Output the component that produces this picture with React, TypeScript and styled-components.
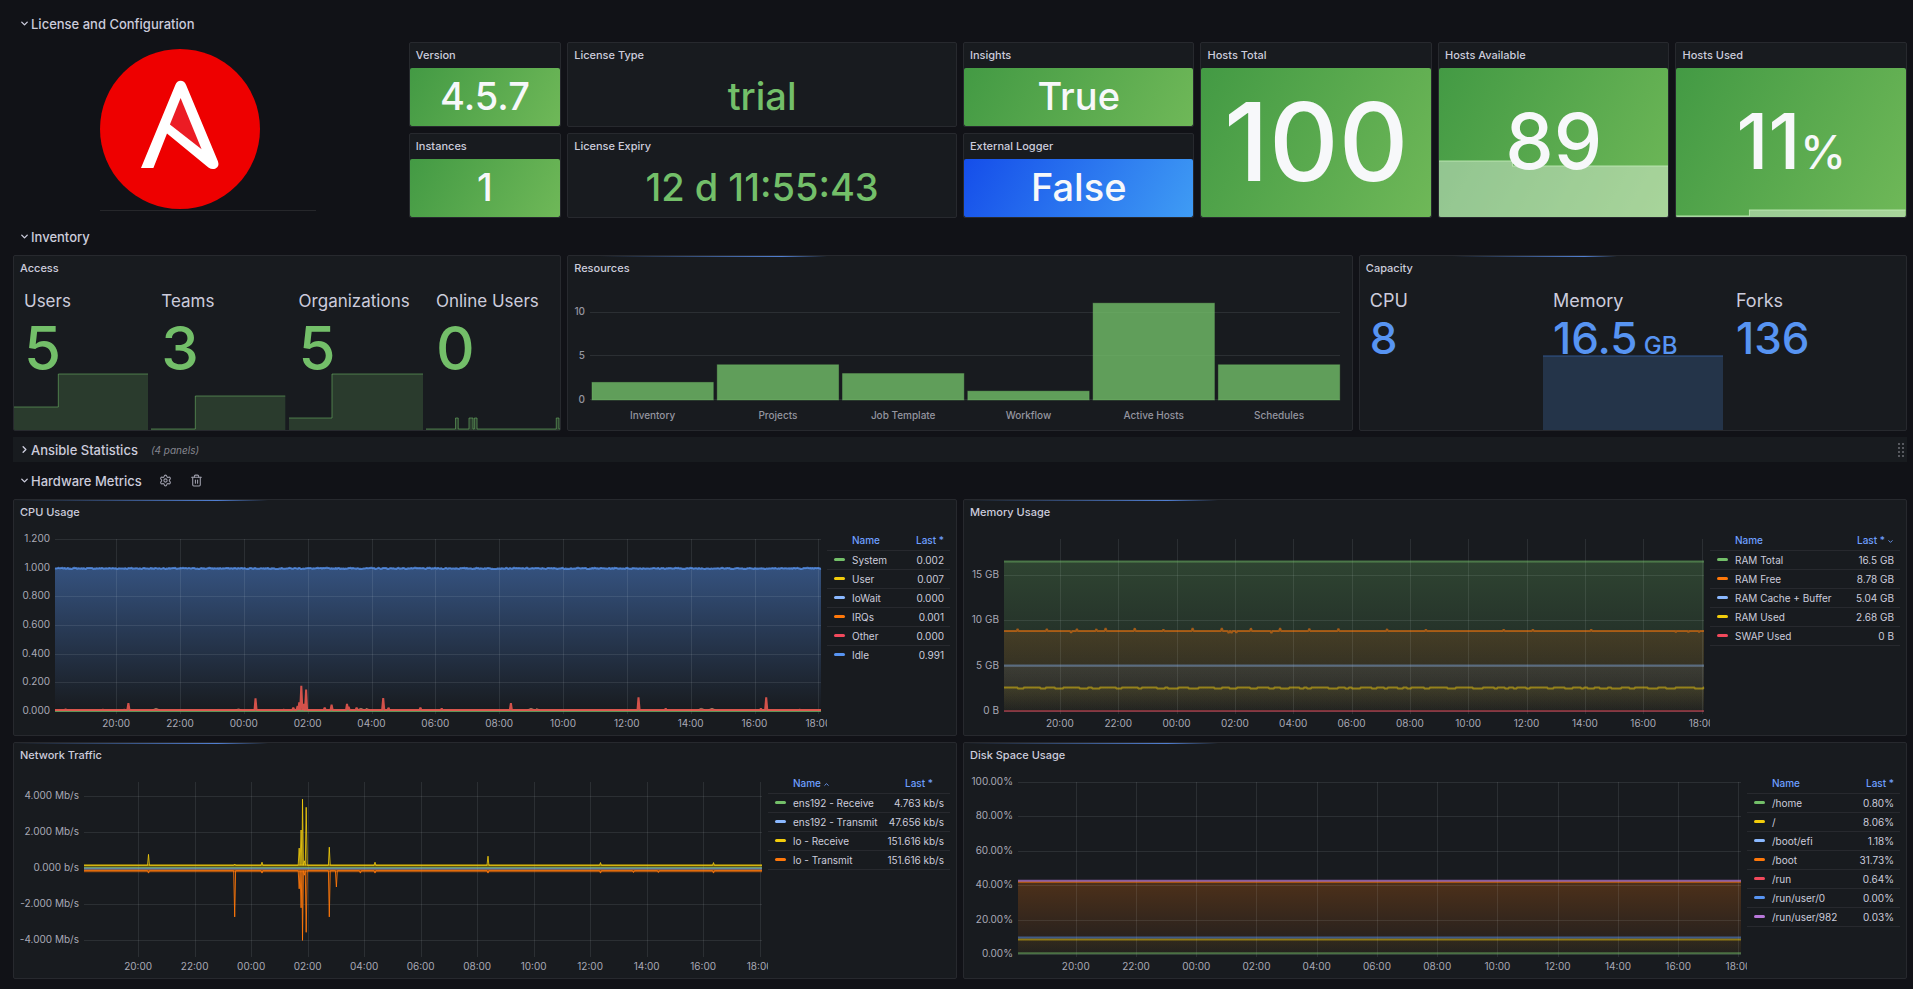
import React, { useId, useLayoutEffect, useRef, useState } from 'react';
import styled, { createGlobalStyle, css } from 'styled-components';
import { ChevronDown, ChevronRight, ChevronUp, Settings, Trash2 } from 'lucide-react';

const color = {
  page: '#111217',
  panel: '#181b1f',
  border: '#27292e',
  text: '#ccccdc',
  muted: '#9d9daa',
  link: '#6e9fff',
  green: '#73bf69',
  blue: '#5794f2',
  lightBlue: '#8ab8ff',
  yellow: '#f2cc0c',
  orange: '#ff780a',
  red: '#f2495c',
  purple: '#b877d9',
  grid: 'rgba(240, 250, 255, 0.09)',
};

const GlobalStyle = createGlobalStyle`
  * { box-sizing: border-box; }
  body {
    margin: 0;
    background: ${color.page};
    color: ${color.text};
    font-family: Inter, "Liberation Sans", sans-serif;
    font-size: 11px;
  }
`;

/* ---------- layout ---------- */

const Page = styled.main`
  display: flex;
  flex-direction: column;
  gap: 6px;
  min-height: 100vh;
  padding: 11px 6px 8px 13px;
`;

const PanelGrid = styled.section<{ $rowHeight: number }>`
  display: grid;
  grid-template-columns: repeat(24, minmax(0, 1fr));
  grid-auto-rows: minmax(${(p) => p.$rowHeight}px, auto);
  gap: 6px;
`;

const RowBar = styled.header<{ $filled?: boolean }>`
  display: flex;
  align-items: center;
  height: 25px;
  padding: 0 3px 0 6px;
  background: ${(p) => (p.$filled ? color.panel : 'transparent')};
`;

const RowHeading = styled.h2`
  margin: 0;
  font-size: 13px;
  line-height: 16px;
  font-weight: 500;
`;

const RowToggle = styled.button`
  display: flex;
  align-items: center;
  gap: 1px;
  padding: 0;
  border: 0;
  background: none;
  color: inherit;
  font: inherit;
  cursor: pointer;
`;

const RowCount = styled.span`
  margin-left: 13px;
  color: #85868f;
  font-size: 10px;
  font-style: italic;
`;

const RowActions = styled.div`
  display: flex;
  gap: 18px;
  margin-left: 17px;
`;

const IconButton = styled.button`
  display: flex;
  padding: 0;
  border: 0;
  background: none;
  color: ${color.muted};
  cursor: pointer;
`;

const DragHandle = styled.span`
  display: grid;
  grid-template-columns: 2px 2px;
  gap: 2px;
  margin-left: auto;
  cursor: move;
`;

const DragDot = styled.i`
  width: 2px;
  height: 2px;
  background: #57595f;
`;

/* ---------- panels ---------- */

const PanelBox = styled.article<{ $cols: number; $rows?: number }>`
  position: relative;
  grid-column: span ${(p) => p.$cols};
  grid-row: span ${(p) => p.$rows ?? 1};
  display: flex;
  flex-direction: column;
  border: 1px solid ${color.border};
  border-radius: 2px;
  background: ${color.panel};
  overflow: hidden;
`;

const PanelTitle = styled.h3`
  flex: none;
  height: 25px;
  margin: 0;
  padding: 0 6px;
  font-size: 11px;
  line-height: 24px;
  font-weight: 500;
`;

const Loader = styled.div<{ $from: number; $span: number }>`
  position: absolute;
  top: 0;
  left: ${(p) => p.$from}%;
  width: ${(p) => p.$span}%;
  height: 1px;
  background: linear-gradient(90deg, rgba(87, 138, 230, 0), rgba(87, 138, 230, 0.9) 80%, rgba(87, 138, 230, 0));
`;

type PanelProps = {
  title: string;
  cols: number;
  rows?: number;
  loader?: [number, number];
  children: React.ReactNode;
};

const Panel = ({ title, cols, rows, loader, children }: PanelProps) => (
  <PanelBox $cols={cols} $rows={rows}>
    {loader && <Loader $from={loader[0]} $span={loader[1]} />}
    <PanelTitle>{title}</PanelTitle>
    {children}
  </PanelBox>
);

/* ---------- stat panels ---------- */

type Tone = 'green' | 'blue' | 'plain';

const StatBody = styled.div<{ $tone: Tone }>`
  position: relative;
  flex: 1;
  display: flex;
  align-items: center;
  justify-content: center;
  padding-bottom: 2px;
  border-radius: 2px;
  color: #f7f8fa;
  ${(p) =>
    p.$tone === 'green' &&
    css`
      background: linear-gradient(120deg, #439a44, #6fb858);
    `}
  ${(p) =>
    p.$tone === 'blue' &&
    css`
      background: linear-gradient(120deg, #154eea, #3f9cf4);
    `}
  ${(p) =>
    p.$tone === 'plain' &&
    css`
      color: ${color.green};
    `}
`;

const StatValue = styled.span<{ $size: number }>`
  position: relative;
  font-size: ${(p) => p.$size}px;
  line-height: 1;
  font-weight: 500;
  white-space: pre;
`;

const Unit = styled.span<{ $size: number }>`
  font-size: ${(p) => p.$size}px;
`;

const SparkSvg = styled.svg<{ $height: number }>`
  position: absolute;
  left: 0;
  bottom: 0;
  display: block;
  width: 100%;
  height: ${(p) => p.$height}px;
`;

type SparkProps = { height: number; points: [number, number][]; stroke: string; fill: string };

/* Step-shaped history; x runs 0-100 over the width, y is pixels above the base line. */
const Spark = ({ height, points, stroke, fill }: SparkProps) => {
  let line = '';
  points.forEach(([x, v], i) => {
    const y = height - v;
    line += i === 0 ? `M${x} ${y}` : `H${x}V${y}`;
  });
  line += 'H100';
  return (
    <SparkSvg $height={height} viewBox={`0 0 100 ${height}`} preserveAspectRatio="none" aria-hidden="true">
      <path d={`${line}V${height}H0Z`} fill={fill} />
      <path d={line} fill="none" stroke={stroke} vectorEffect="non-scaling-stroke" />
    </SparkSvg>
  );
};

const MetricRow = styled.div`
  flex: 1;
  display: flex;
  gap: 3px;
`;

const Metric = styled.div<{ $tint: string }>`
  position: relative;
  flex: 1 1 0;
  min-width: 0;
  padding: 9px 0 0 10px;
  color: ${(p) => p.$tint};
  white-space: nowrap;
`;

const MetricLabel = styled.div<{ $size: number }>`
  color: ${color.text};
  font-size: ${(p) => p.$size}px;
  line-height: 22px;
`;

const MetricValue = styled.div<{ $size: number; $line: number }>`
  position: relative;
  font-size: ${(p) => p.$size}px;
  line-height: ${(p) => p.$line}px;
  font-weight: 500;
`;

/* ---------- legend ---------- */

const LegendTable = styled.table<{ $width: number }>`
  flex: none;
  align-self: flex-start;
  width: ${(p) => p.$width}px;
  margin-top: 6px;
  border-collapse: collapse;
  font-size: 10px;
  line-height: 18px;
  white-space: nowrap;
`;

const LegendRow = styled.tr<{ $open?: boolean }>`
  height: 19px;
  border-bottom: ${(p) => (p.$open ? '0' : `1px solid ${color.border}`)};
`;

const NameHead = styled.th`
  padding: 0 0 0 25px;
  color: ${color.link};
  font-weight: 500;
  text-align: left;
`;

const ValueHead = styled.th<{ $reserve?: boolean }>`
  padding: 0 ${(p) => (p.$reserve ? 17 : 6)}px 0 0;
  color: ${color.link};
  font-weight: 500;
  text-align: right;
`;

const NameCell = styled.td`
  padding: 0 0 0 7px;
`;

const NameWrap = styled.span`
  display: flex;
  align-items: center;
  gap: 7px;
`;

const Swatch = styled.i<{ $tint: string }>`
  width: 11px;
  height: 3px;
  border-radius: 2px;
  background: ${(p) => p.$tint};
`;

const ValueCell = styled.td`
  padding: 0 6px 0 0;
  text-align: right;
`;

const SortIcon = styled.span`
  display: inline-flex;
  margin-left: 2px;
  vertical-align: middle;
`;

type LegendItem = [string, string, string];
type LegendProps = { width: number; items: LegendItem[]; sort?: 'name' | 'last'; openEnd?: boolean };

const Legend = ({ width, items, sort, openEnd }: LegendProps) => (
  <LegendTable $width={width}>
    <thead>
      <LegendRow>
        <NameHead scope="col">
          Name
          {sort === 'name' && (
            <SortIcon>
              <ChevronUp size={7} strokeWidth={3} />
            </SortIcon>
          )}
        </NameHead>
        <ValueHead scope="col" $reserve={sort === 'name'}>
          Last *
          {sort === 'last' && (
            <SortIcon>
              <ChevronDown size={7} strokeWidth={3} />
            </SortIcon>
          )}
        </ValueHead>
      </LegendRow>
    </thead>
    <tbody>
      {items.map(([name, tint, value], i) => (
        <LegendRow key={name} $open={openEnd && i === items.length - 1}>
          <NameCell>
            <NameWrap>
              <Swatch $tint={tint} />
              {name}
            </NameWrap>
          </NameCell>
          <ValueCell>{value}</ValueCell>
        </LegendRow>
      ))}
    </tbody>
  </LegendTable>
);

/* ---------- charts ---------- */

const ChartBody = styled.div`
  flex: 1;
  display: flex;
  padding: 0 6px;
`;

const ChartFrame = styled.div`
  flex: 1;
  min-width: 0;
`;

const ChartSvg = styled.svg`
  display: block;
  width: 100%;
`;

const AxisText = styled.text`
  fill: #a9a9b6;
  font-size: 10px;
`;

const BarAxisText = styled(AxisText)`
  fill: #94959f;
  font-weight: 500;
`;

const useWidth = (initial: number) => {
  const ref = useRef<HTMLDivElement>(null);
  const [width, setWidth] = useState(initial);
  useLayoutEffect(() => {
    const el = ref.current;
    if (!el) return;
    const measure = () => setWidth(Math.floor(el.clientWidth));
    measure();
    const observer = new ResizeObserver(measure);
    observer.observe(el);
    return () => observer.disconnect();
  }, []);
  return [ref, width] as const;
};

const TIMES = ['20:00', '22:00', '00:00', '02:00', '04:00', '06:00', '08:00', '10:00', '12:00', '14:00', '16:00', '18:00'];
const DAY = 1440;
const FIRST_TICK = 115;
const TOP = 14;
const BOTTOM = 186;

type Point = [number, number];
type Series = {
  data: Point[];
  tint: string;
  width?: number;
  opacity?: number;
  fill?: [number, number];
  base?: number;
};

type TimeChartProps = {
  left: number;
  min: number;
  max: number;
  ticks: [number, string][];
  series: Series[];
};

const TimeChart = ({ left, min, max, ticks, series }: TimeChartProps) => {
  const [ref, width] = useWidth(740);
  const id = useId().replace(/:/g, '');
  const right = width - 6;
  const x = (m: number) => left + (m / DAY) * (right - left);
  const y = (v: number) => BOTTOM - ((v - min) / (max - min)) * (BOTTOM - TOP);
  const path = (pts: Point[]) => pts.map(([m, v], i) => `${i ? 'L' : 'M'}${x(m).toFixed(1)} ${y(v).toFixed(1)}`).join('');
  return (
    <ChartFrame ref={ref}>
      <ChartSvg height={205} viewBox={`0 0 ${width} 205`} role="img">
        <defs>
          {series.map((s, i) =>
            s.fill ? (
              <linearGradient
                key={i}
                id={`${id}-${i}`}
                gradientUnits="userSpaceOnUse"
                x1="0"
                x2="0"
                y1={y(Math.max(...s.data.map((p) => p[1])))}
                y2={y(s.base ?? 0)}
              >
                <stop offset="0" stopColor={s.tint} stopOpacity={s.fill[0]} />
                <stop offset="1" stopColor={s.tint} stopOpacity={s.fill[1]} />
              </linearGradient>
            ) : null,
          )}
        </defs>
        {series.map((s, i) =>
          s.fill ? (
            <path key={i} d={`${path(s.data)}L${right} ${y(s.base ?? 0)}L${left} ${y(s.base ?? 0)}Z`} fill={`url(#${id}-${i})`} />
          ) : null,
        )}
        <g stroke={color.grid} shapeRendering="crispEdges">
          {ticks.map(([v]) => (
            <line key={v} x1={left} x2={right} y1={Math.round(y(v))} y2={Math.round(y(v))} />
          ))}
          {TIMES.map((t, i) => (
            <line key={t} x1={Math.round(x(FIRST_TICK + i * 120))} x2={Math.round(x(FIRST_TICK + i * 120))} y1={TOP} y2={BOTTOM + 3} />
          ))}
        </g>
        {series.map((s, i) => (
          <path
            key={i}
            d={path(s.data)}
            fill="none"
            stroke={s.tint}
            strokeWidth={s.width ?? 1}
            strokeOpacity={s.opacity ?? 1}
            strokeLinejoin="bevel"
          />
        ))}
        {ticks.map(([v, label]) => (
          <AxisText key={label} x={left - 5} y={Math.round(y(v)) + 3} textAnchor="end">
            {label}
          </AxisText>
        ))}
        {TIMES.map((t, i) => (
          <AxisText key={t} x={x(FIRST_TICK + i * 120)} y={202} textAnchor="middle">
            {t}
          </AxisText>
        ))}
      </ChartSvg>
    </ChartFrame>
  );
};

const flat = (v: number): Point[] => [
  [0, v],
  [DAY, v],
];

/* Flat line broken by narrow peaks, each given as [minute, height]. */
const peaks = (level: number, list: Point[], half = 2): Point[] => {
  const pts: Point[] = [[0, level]];
  list.forEach(([m, v]) => {
    const prev = pts[pts.length - 1][0];
    pts.push([Math.max(m - half, prev), level], [m, v], [m + half, level]);
  });
  pts.push([DAY, level]);
  return pts;
};

const jitter = (level: number, amount: number, step: number, seed: number): Point[] => {
  const pts: Point[] = [];
  let s = seed;
  for (let m = 0; m <= DAY; m += step) {
    s = (s * 1103515245 + 12345) % 2147483648;
    pts.push([m, level + (s / 2147483648 - 0.5) * amount]);
  }
  return pts;
};

/* Line that drops to a second level for short, uneven stretches. */
const dips = (level: number, drop: number, seed: number): Point[] => {
  const pts: Point[] = [];
  let s = seed;
  let m = 0;
  let low = false;
  while (m < DAY) {
    s = (s * 1103515245 + 12345) % 2147483648;
    const v = low ? level - drop : level;
    const end = Math.min(DAY, m + 6 + (s / 2147483648) * (low ? 16 : 34));
    pts.push([m, v], [end, v]);
    m = end;
    low = !low;
  }
  return pts;
};

const cpuPeaks: Point[] = [
  [20, 0.012], [90, 0.01], [130, 0.01], [138, 0.055], [338, 0.008], [377, 0.088], [430, 0.01], [448, 0.024], [456, 0.035], [459, 0.06],
  [463, 0.175], [467, 0.05], [472, 0.15], [507, 0.024], [520, 0.045], [549, 0.05], [552, 0.03], [567, 0.022], [617, 0.09], [627, 0.022],
  [687, 0.024], [727, 0.016], [857, 0.055], [1097, 0.095], [1148, 0.016], [1327, 0.016], [1337, 0.095], [1400, 0.01],
];

const cpuSeries: Series[] = [
  { data: jitter(0.995, 0.009, 2, 7), tint: color.blue, fill: [0.45, 0], opacity: 0.75, width: 2 },
  { data: flat(0), tint: color.green, width: 2, opacity: 0.7 },
  { data: peaks(0.006, [[190, 0.018], [345, 0.014], [575, 0.018], [585, 0.018], [895, 0.018], [905, 0.016], [1215, 0.018], [1235, 0.018]], 8), tint: '#b58a6c', opacity: 0.9 },
  { data: peaks(0.006, cpuPeaks), tint: '#e8584f', width: 2, opacity: 0.9 },
];

const memorySeries: Series[] = [
  { data: flat(16.5), tint: color.green, fill: [0.25, 0.03], opacity: 0.5, width: 2 },
  {
    data: peaks(8.85, [
      [28, 9.05], [88, 9.05], [138, 8.65], [150, 9.05], [190, 9.05], [209, 9.15], [269, 9.15], [328, 9.0], [388, 9.15], [448, 9.15],
      [462, 8.6], [468, 8.6], [478, 8.65], [508, 9.15], [550, 8.6], [568, 9.15], [628, 9.1], [688, 9.1], [788, 9.05], [868, 9.0],
      [1028, 9.0], [1088, 9.0], [1208, 9.0], [1382, 8.7], [1408, 8.7], [1430, 8.7],
    ], 2),
    tint: color.orange,
    fill: [0.15, 0.03],
    opacity: 0.55,
    width: 2,
  },
  { data: flat(5.04), tint: color.lightBlue, fill: [0.08, 0], opacity: 0.4, width: 2 },
  { data: dips(2.6, 0.12, 11), tint: color.yellow, fill: [0.08, 0], opacity: 0.5, width: 2 },
  { data: flat(0), tint: color.red, opacity: 0.45, width: 2 },
];

const networkSeries: Series[] = [
  { data: flat(0.15), tint: color.yellow, width: 2, opacity: 0.5, fill: [0.25, 0.2] },
  { data: flat(-0.15), tint: color.orange, width: 3, opacity: 0.55 },
  { data: flat(-0.03), tint: color.lightBlue, width: 2, opacity: 0.6 },
  { data: flat(0.02), tint: color.green, opacity: 0.7 },
  {
    data: peaks(0.15, [[137, 0.75], [320, 0.22], [378, 0.32], [457, 1.1], [461, 2.1], [464, 3.8], [468, 0.4], [472, 3.35], [521, 1.15], [618, 0.32], [858, 0.65], [1097, 0.3], [1337, 0.3]]),
    tint: color.yellow,
    opacity: 0.85,
  },
  {
    data: peaks(-0.15, [[137, -0.28], [320, -2.7], [378, -0.28], [457, -1.15], [461, -2.2], [464, -4], [468, -0.4], [472, -3.55], [521, -2.7], [536, -1.05], [587, -0.28], [618, -0.28], [858, -0.28], [1097, -0.28], [1167, -0.25], [1220, -0.25], [1337, -0.28]]),
    tint: color.orange,
    opacity: 0.9,
  },
];

const diskSeries: Series[] = [
  { data: flat(41.8), tint: color.orange, fill: [0.23, 0.03], width: 2, opacity: 0.5 },
  { data: flat(42.6), tint: color.purple, width: 2, opacity: 0.7 },
  { data: flat(8.5), tint: color.yellow, fill: [0.05, 0.02], width: 2, opacity: 0.5 },
  { data: flat(9.6), tint: color.blue, width: 2, opacity: 0.5 },
  { data: flat(0.4), tint: color.green, width: 2, opacity: 0.5 },
];

const resources: [string, number][] = [
  ['Inventory', 2],
  ['Projects', 4],
  ['Job Template', 3],
  ['Workflow', 1],
  ['Active Hosts', 11],
  ['Schedules', 4],
];

const BarChart = () => {
  const [ref, width] = useWidth(770);
  const left = 18;
  const right = width - 6;
  const y = (v: number) => 119 - v * 8.8;
  const pitch = (right - left + 4) / resources.length;
  return (
    <ChartFrame ref={ref}>
      <ChartSvg height={145} viewBox={`0 0 ${width} 145`} role="img">
        {[0, 5, 10].map((v) => (
          <g key={v}>
            <line x1={left - 2} x2={right} y1={Math.round(y(v))} y2={Math.round(y(v))} stroke={color.grid} shapeRendering="crispEdges" />
            <BarAxisText x={left - 7} y={Math.round(y(v)) + 3} textAnchor="end">
              {v}
            </BarAxisText>
          </g>
        ))}
        {resources.map(([name, v], i) => (
          <g key={name}>
            <rect
              x={left + i * pitch}
              y={y(v)}
              width={pitch - 4}
              height={v * 8.8}
              fill={color.green}
              fillOpacity={0.8}
              stroke={color.green}
              strokeOpacity={0.4}
            />
            <BarAxisText x={left + i * pitch + (pitch - 4) / 2} y={138} textAnchor="middle">
              {name}
            </BarAxisText>
          </g>
        ))}
      </ChartSvg>
    </ChartFrame>
  );
};

/* ---------- logo ---------- */

const LogoCell = styled.div`
  grid-column: span 5;
  grid-row: span 2;
  display: flex;
  justify-content: center;
  align-items: flex-start;
  padding-top: 7px;
`;

const LogoBlock = styled.div`
  width: 216px;
  border-bottom: 1px solid #26272b;
`;

const LogoSvg = styled.svg`
  display: block;
  width: 160px;
  height: 161px;
`;

const Logo = () => (
  <LogoCell>
    <LogoBlock>
      <LogoSvg viewBox="0 0 160 161" role="img" aria-label="Ansible">
        <circle cx="80" cy="80" r="80" fill="#ee0000" />
        <path
          d="M75.4 35.8Q77 31.8 80.6 31.8Q84.3 31.8 86 35.8L118 112.5Q119.6 117.4 115.6 119.5Q112 121 108.4 118.4L67 84.6L53.4 119H41Z"
          fill="#fff"
        />
        <path d="M80.6 49L101.6 100.2L69.9 75.6Z" fill="#ec1c24" />
      </LogoSvg>
    </LogoBlock>
  </LogoCell>
);

/* ---------- page ---------- */

const RowHeader = ({ title, closed, note, children }: { title: string; closed?: boolean; note?: string; children?: React.ReactNode }) => (
  <RowBar $filled={closed}>
    <RowHeading>
      <RowToggle type="button" aria-expanded={!closed}>
        {closed ? <ChevronRight size={11} strokeWidth={3} /> : <ChevronDown size={11} strokeWidth={3} />}
        {title}
      </RowToggle>
    </RowHeading>
    {note && <RowCount>{note}</RowCount>}
    {children}
  </RowBar>
);

const sparkGreen = { stroke: 'rgba(115, 191, 105, 0.55)', fill: 'rgba(115, 191, 105, 0.2)' };
const sparkWhite = { stroke: 'rgba(190, 232, 178, 0.9)', fill: 'rgba(255, 255, 255, 0.4)' };

const access: { name: string; value: string; points: [number, number][] }[] = [
  { name: 'Users', value: '5', points: [[0, 23], [33, 56]] },
  { name: 'Teams', value: '3', points: [[0, 1], [33, 34]] },
  { name: 'Organizations', value: '5', points: [[0, 12], [32, 56]] },
  {
    name: 'Online Users',
    value: '0',
    points: [[0, 1], [22, 12], [24, 1], [32, 12], [35, 1], [36, 12], [38, 1], [97, 12], [99, 1]],
  },
];

export default function App() {
  return (
    <>
      <GlobalStyle />
      <Page>
        <RowHeader title="License and Configuration" />
        <PanelGrid $rowHeight={85}>
          <Logo />
          <Panel title="Version" cols={2}>
            <StatBody $tone="green">
              <StatValue $size={38}>4.5.7</StatValue>
            </StatBody>
          </Panel>
          <Panel title="License Type" cols={5}>
            <StatBody $tone="plain">
              <StatValue $size={38}>trial</StatValue>
            </StatBody>
          </Panel>
          <Panel title="Insights" cols={3}>
            <StatBody $tone="green">
              <StatValue $size={38}>True</StatValue>
            </StatBody>
          </Panel>
          <Panel title="Hosts Total" cols={3} rows={2}>
            <StatBody $tone="green">
              <StatValue $size={108}>100</StatValue>
            </StatBody>
          </Panel>
          <Panel title="Hosts Available" cols={3} rows={2}>
            <StatBody $tone="green">
              <Spark height={57} points={[[0, 56], [32, 51]]} {...sparkWhite} />
              <StatValue $size={77}>89</StatValue>
            </StatBody>
          </Panel>
          <Panel title="Hosts Used" cols={3} rows={2}>
            <StatBody $tone="green">
              <Spark height={10} points={[[0, 1], [32, 7]]} {...sparkWhite} />
              <StatValue $size={77}>
                11<Unit $size={46}>%</Unit>
              </StatValue>
            </StatBody>
          </Panel>
          <Panel title="Instances" cols={2}>
            <StatBody $tone="green">
              <StatValue $size={38}>1</StatValue>
            </StatBody>
          </Panel>
          <Panel title="License Expiry" cols={5}>
            <StatBody $tone="plain">
              <StatValue $size={38}>12 d 11:55:43</StatValue>
            </StatBody>
          </Panel>
          <Panel title="External Logger" cols={3}>
            <StatBody $tone="blue">
              <StatValue $size={38}>False</StatValue>
            </StatBody>
          </Panel>
        </PanelGrid>

        <RowHeader title="Inventory" />
        <PanelGrid $rowHeight={176}>
          <Panel title="Access" cols={7}>
            <MetricRow>
              {access.map((m) => (
                <Metric key={m.name} $tint={color.green}>
                  <Spark height={57} points={m.points} {...sparkGreen} />
                  <MetricLabel $size={17}>{m.name}</MetricLabel>
                  <MetricValue $size={60} $line={72}>
                    {m.value}
                  </MetricValue>
                </Metric>
              ))}
            </MetricRow>
          </Panel>
          <Panel title="Resources" cols={10} loader={[4, 29]}>
            <ChartBody>
              <BarChart />
            </ChartBody>
          </Panel>
          <Panel title="Capacity" cols={7} loader={[17, 30]}>
            <MetricRow>
              <Metric $tint={color.blue}>
                <MetricLabel $size={18}>CPU</MetricLabel>
                <MetricValue $size={44} $line={52}>
                  8
                </MetricValue>
              </Metric>
              <Metric $tint={color.blue}>
                <Spark height={75} points={[[0, 74]]} stroke="#31568f" fill="#243449" />
                <MetricLabel $size={18}>Memory</MetricLabel>
                <MetricValue $size={44} $line={52}>
                  16.5<Unit $size={24}> GB</Unit>
                </MetricValue>
              </Metric>
              <Metric $tint={color.blue}>
                <MetricLabel $size={18}>Forks</MetricLabel>
                <MetricValue $size={44} $line={52}>
                  136
                </MetricValue>
              </Metric>
            </MetricRow>
          </Panel>
        </PanelGrid>

        <RowHeader title="Ansible Statistics" closed note="(4 panels)">
          <DragHandle>
            {Array.from({ length: 8 }, (_, i) => (
              <DragDot key={i} />
            ))}
          </DragHandle>
        </RowHeader>
        <RowHeader title="Hardware Metrics">
          <RowActions>
            <IconButton type="button" aria-label="Row options">
              <Settings size={13} />
            </IconButton>
            <IconButton type="button" aria-label="Delete row">
              <Trash2 size={13} />
            </IconButton>
          </RowActions>
        </RowHeader>

        <PanelGrid $rowHeight={237}>
          <Panel title="CPU Usage" cols={12} loader={[0, 27]}>
            <ChartBody>
              <TimeChart
                left={35}
                min={0}
                max={1.2}
                ticks={[[0, '0.000'], [0.2, '0.200'], [0.4, '0.400'], [0.6, '0.600'], [0.8, '0.800'], [1, '1.000'], [1.2, '1.200']]}
                series={cpuSeries}
              />
              <Legend
                width={123}
                openEnd
                items={[
                  ['System', color.green, '0.002'],
                  ['User', color.yellow, '0.007'],
                  ['IoWait', color.lightBlue, '0.000'],
                  ['IRQs', color.orange, '0.001'],
                  ['Other', color.red, '0.000'],
                  ['Idle', color.blue, '0.991'],
                ]}
              />
            </ChartBody>
          </Panel>
          <Panel title="Memory Usage" cols={12} loader={[0, 27]}>
            <ChartBody>
              <TimeChart
                left={34}
                min={0}
                max={19}
                ticks={[[0, '0 B'], [5, '5 GB'], [10, '10 GB'], [15, '15 GB']]}
                series={memorySeries}
              />
              <Legend
                width={190}
                sort="last"
                items={[
                  ['RAM Total', color.green, '16.5 GB'],
                  ['RAM Free', color.orange, '8.78 GB'],
                  ['RAM Cache + Buffer', color.lightBlue, '5.04 GB'],
                  ['RAM Used', color.yellow, '2.68 GB'],
                  ['SWAP Used', color.red, '0 B'],
                ]}
              />
            </ChartBody>
          </Panel>
          <Panel title="Network Traffic" cols={12} loader={[0, 27]}>
            <ChartBody>
              <TimeChart
                left={64}
                min={-4.75}
                max={4.75}
                ticks={[[-4, '-4.000 Mb/s'], [-2, '-2.000 Mb/s'], [0, '0.000 b/s'], [2, '2.000 Mb/s'], [4, '4.000 Mb/s']]}
                series={networkSeries}
              />
              <Legend
                width={182}
                sort="name"
                items={[
                  ['ens192 - Receive', color.green, '4.763 kb/s'],
                  ['ens192 - Transmit', color.lightBlue, '47.656 kb/s'],
                  ['lo - Receive', color.yellow, '151.616 kb/s'],
                  ['lo - Transmit', color.orange, '151.616 kb/s'],
                ]}
              />
            </ChartBody>
          </Panel>
          <Panel title="Disk Space Usage" cols={12} loader={[0, 27]}>
            <ChartBody>
              <TimeChart
                left={48}
                min={0}
                max={100}
                ticks={[[0, '0.00%'], [20, '20.00%'], [40, '40.00%'], [60, '60.00%'], [80, '80.00%'], [100, '100.00%']]}
                series={diskSeries}
              />
              <Legend
                width={153}
                items={[
                  ['/home', color.green, '0.80%'],
                  ['/', color.yellow, '8.06%'],
                  ['/boot/efi', color.lightBlue, '1.18%'],
                  ['/boot', color.orange, '31.73%'],
                  ['/run', color.red, '0.64%'],
                  ['/run/user/0', color.blue, '0.00%'],
                  ['/run/user/982', color.purple, '0.03%'],
                ]}
              />
            </ChartBody>
          </Panel>
        </PanelGrid>
      </Page>
    </>
  );
}
